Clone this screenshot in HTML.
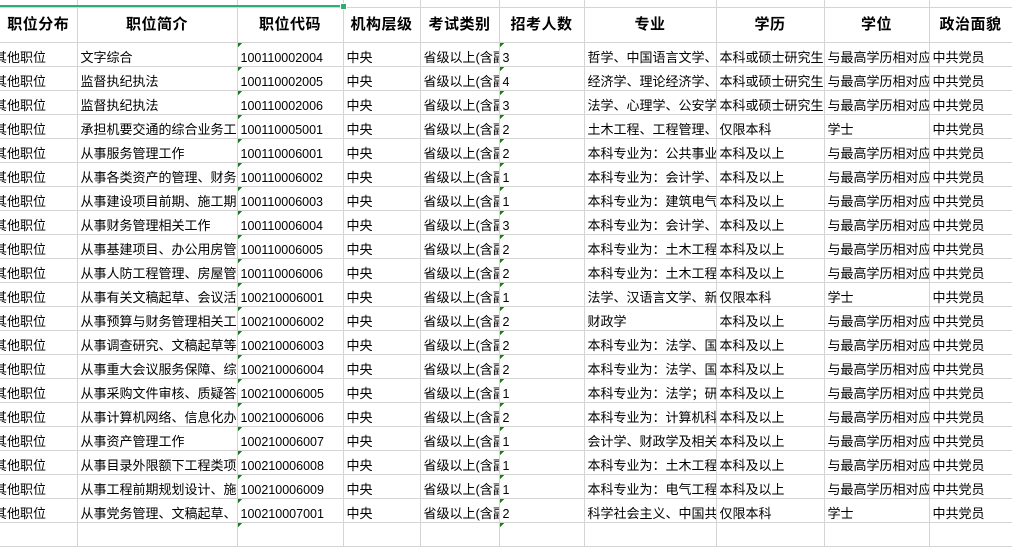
<!DOCTYPE html>
<html><head><meta charset="utf-8"><style>
html,body{margin:0;padding:0;background:#fff;width:1012px;height:526px;overflow:hidden}
table{position:absolute;left:0;top:-16px;border-collapse:collapse;table-layout:fixed;width:1012px;font-family:"Liberation Sans","Noto Sans CJK SC",sans-serif;font-size:13px;color:#000}
td{border-right:1px solid #d4d4d4;border-bottom:1px solid #d4d4d4;padding:0 0 0 3px;white-space:nowrap;overflow:hidden;height:23px;line-height:16px;vertical-align:bottom}
tr.h td{height:34px;font-weight:bold;font-size:15px;text-align:center;vertical-align:middle;padding:0;line-height:20px;letter-spacing:0.5px}
td.c1{text-indent:-6px;padding-left:0}
td.n{font-size:12.5px}
td.t{background:linear-gradient(135deg,#1e7b1e 0,#1e7b1e 3px,transparent 3px) no-repeat 0 0/6px 6px}
.gl{position:absolute;left:0;top:5px;width:343px;height:2px;background:#2fae74}
.hd{position:absolute;left:340px;top:3px;width:5px;height:5px;background:#2fae74;border:1px solid #fff}
</style></head><body>
<table>
<colgroup><col style="width:77px"><col style="width:160px"><col style="width:106px"><col style="width:77px"><col style="width:79px"><col style="width:85px"><col style="width:132px"><col style="width:108px"><col style="width:105px"><col style="width:83px"></colgroup>
<tr><td></td><td></td><td></td><td></td><td></td><td></td><td></td><td></td><td></td><td></td></tr>
<tr class="h"><td>职位分布</td><td>职位简介</td><td>职位代码</td><td>机构层级</td><td>考试类别</td><td>招考人数</td><td>专业</td><td>学历</td><td>学位</td><td>政治面貌</td></tr>
<tr><td class="c1">其他职位</td><td>文字综合</td><td class="t n">100110002004</td><td>中央</td><td>省级以上(含副省级)</td><td class="t n">3</td><td>哲学、中国语言文学、</td><td>本科或硕士研究生</td><td>与最高学历相对应</td><td>中共党员</td></tr>
<tr><td class="c1">其他职位</td><td>监督执纪执法</td><td class="t n">100110002005</td><td>中央</td><td>省级以上(含副省级)</td><td class="t n">4</td><td>经济学、理论经济学、</td><td>本科或硕士研究生</td><td>与最高学历相对应</td><td>中共党员</td></tr>
<tr><td class="c1">其他职位</td><td>监督执纪执法</td><td class="t n">100110002006</td><td>中央</td><td>省级以上(含副省级)</td><td class="t n">3</td><td>法学、心理学、公安学</td><td>本科或硕士研究生</td><td>与最高学历相对应</td><td>中共党员</td></tr>
<tr><td class="c1">其他职位</td><td>承担机要交通的综合业务工作</td><td class="t n">100110005001</td><td>中央</td><td>省级以上(含副省级)</td><td class="t n">2</td><td>土木工程、工程管理、</td><td>仅限本科</td><td>学士</td><td>中共党员</td></tr>
<tr><td class="c1">其他职位</td><td>从事服务管理工作</td><td class="t n">100110006001</td><td>中央</td><td>省级以上(含副省级)</td><td class="t n">2</td><td>本科专业为：公共事业</td><td>本科及以上</td><td>与最高学历相对应</td><td>中共党员</td></tr>
<tr><td class="c1">其他职位</td><td>从事各类资产的管理、财务</td><td class="t n">100110006002</td><td>中央</td><td>省级以上(含副省级)</td><td class="t n">1</td><td>本科专业为：会计学、</td><td>本科及以上</td><td>与最高学历相对应</td><td>中共党员</td></tr>
<tr><td class="c1">其他职位</td><td>从事建设项目前期、施工期</td><td class="t n">100110006003</td><td>中央</td><td>省级以上(含副省级)</td><td class="t n">1</td><td>本科专业为：建筑电气</td><td>本科及以上</td><td>与最高学历相对应</td><td>中共党员</td></tr>
<tr><td class="c1">其他职位</td><td>从事财务管理相关工作</td><td class="t n">100110006004</td><td>中央</td><td>省级以上(含副省级)</td><td class="t n">3</td><td>本科专业为：会计学、</td><td>本科及以上</td><td>与最高学历相对应</td><td>中共党员</td></tr>
<tr><td class="c1">其他职位</td><td>从事基建项目、办公用房管</td><td class="t n">100110006005</td><td>中央</td><td>省级以上(含副省级)</td><td class="t n">2</td><td>本科专业为：土木工程</td><td>本科及以上</td><td>与最高学历相对应</td><td>中共党员</td></tr>
<tr><td class="c1">其他职位</td><td>从事人防工程管理、房屋管</td><td class="t n">100110006006</td><td>中央</td><td>省级以上(含副省级)</td><td class="t n">2</td><td>本科专业为：土木工程</td><td>本科及以上</td><td>与最高学历相对应</td><td>中共党员</td></tr>
<tr><td class="c1">其他职位</td><td>从事有关文稿起草、会议活</td><td class="t n">100210006001</td><td>中央</td><td>省级以上(含副省级)</td><td class="t n">1</td><td>法学、汉语言文学、新</td><td>仅限本科</td><td>学士</td><td>中共党员</td></tr>
<tr><td class="c1">其他职位</td><td>从事预算与财务管理相关工</td><td class="t n">100210006002</td><td>中央</td><td>省级以上(含副省级)</td><td class="t n">2</td><td>财政学</td><td>本科及以上</td><td>与最高学历相对应</td><td>中共党员</td></tr>
<tr><td class="c1">其他职位</td><td>从事调查研究、文稿起草等</td><td class="t n">100210006003</td><td>中央</td><td>省级以上(含副省级)</td><td class="t n">2</td><td>本科专业为：法学、国</td><td>本科及以上</td><td>与最高学历相对应</td><td>中共党员</td></tr>
<tr><td class="c1">其他职位</td><td>从事重大会议服务保障、综</td><td class="t n">100210006004</td><td>中央</td><td>省级以上(含副省级)</td><td class="t n">2</td><td>本科专业为：法学、国</td><td>本科及以上</td><td>与最高学历相对应</td><td>中共党员</td></tr>
<tr><td class="c1">其他职位</td><td>从事采购文件审核、质疑答</td><td class="t n">100210006005</td><td>中央</td><td>省级以上(含副省级)</td><td class="t n">1</td><td>本科专业为：法学；研</td><td>本科及以上</td><td>与最高学历相对应</td><td>中共党员</td></tr>
<tr><td class="c1">其他职位</td><td>从事计算机网络、信息化办</td><td class="t n">100210006006</td><td>中央</td><td>省级以上(含副省级)</td><td class="t n">2</td><td>本科专业为：计算机科</td><td>本科及以上</td><td>与最高学历相对应</td><td>中共党员</td></tr>
<tr><td class="c1">其他职位</td><td>从事资产管理工作</td><td class="t n">100210006007</td><td>中央</td><td>省级以上(含副省级)</td><td class="t n">1</td><td>会计学、财政学及相关</td><td>本科及以上</td><td>与最高学历相对应</td><td>中共党员</td></tr>
<tr><td class="c1">其他职位</td><td>从事目录外限额下工程类项</td><td class="t n">100210006008</td><td>中央</td><td>省级以上(含副省级)</td><td class="t n">1</td><td>本科专业为：土木工程</td><td>本科及以上</td><td>与最高学历相对应</td><td>中共党员</td></tr>
<tr><td class="c1">其他职位</td><td>从事工程前期规划设计、施</td><td class="t n">100210006009</td><td>中央</td><td>省级以上(含副省级)</td><td class="t n">1</td><td>本科专业为：电气工程</td><td>本科及以上</td><td>与最高学历相对应</td><td>中共党员</td></tr>
<tr><td class="c1">其他职位</td><td>从事党务管理、文稿起草、</td><td class="t n">100210007001</td><td>中央</td><td>省级以上(含副省级)</td><td class="t n">2</td><td>科学社会主义、中国共</td><td>仅限本科</td><td>学士</td><td>中共党员</td></tr>
<tr><td></td><td></td><td class="t"></td><td></td><td></td><td class="t"></td><td></td><td></td><td></td><td></td></tr>
</table>
<div class="gl"></div><div class="hd"></div>
</body></html>
